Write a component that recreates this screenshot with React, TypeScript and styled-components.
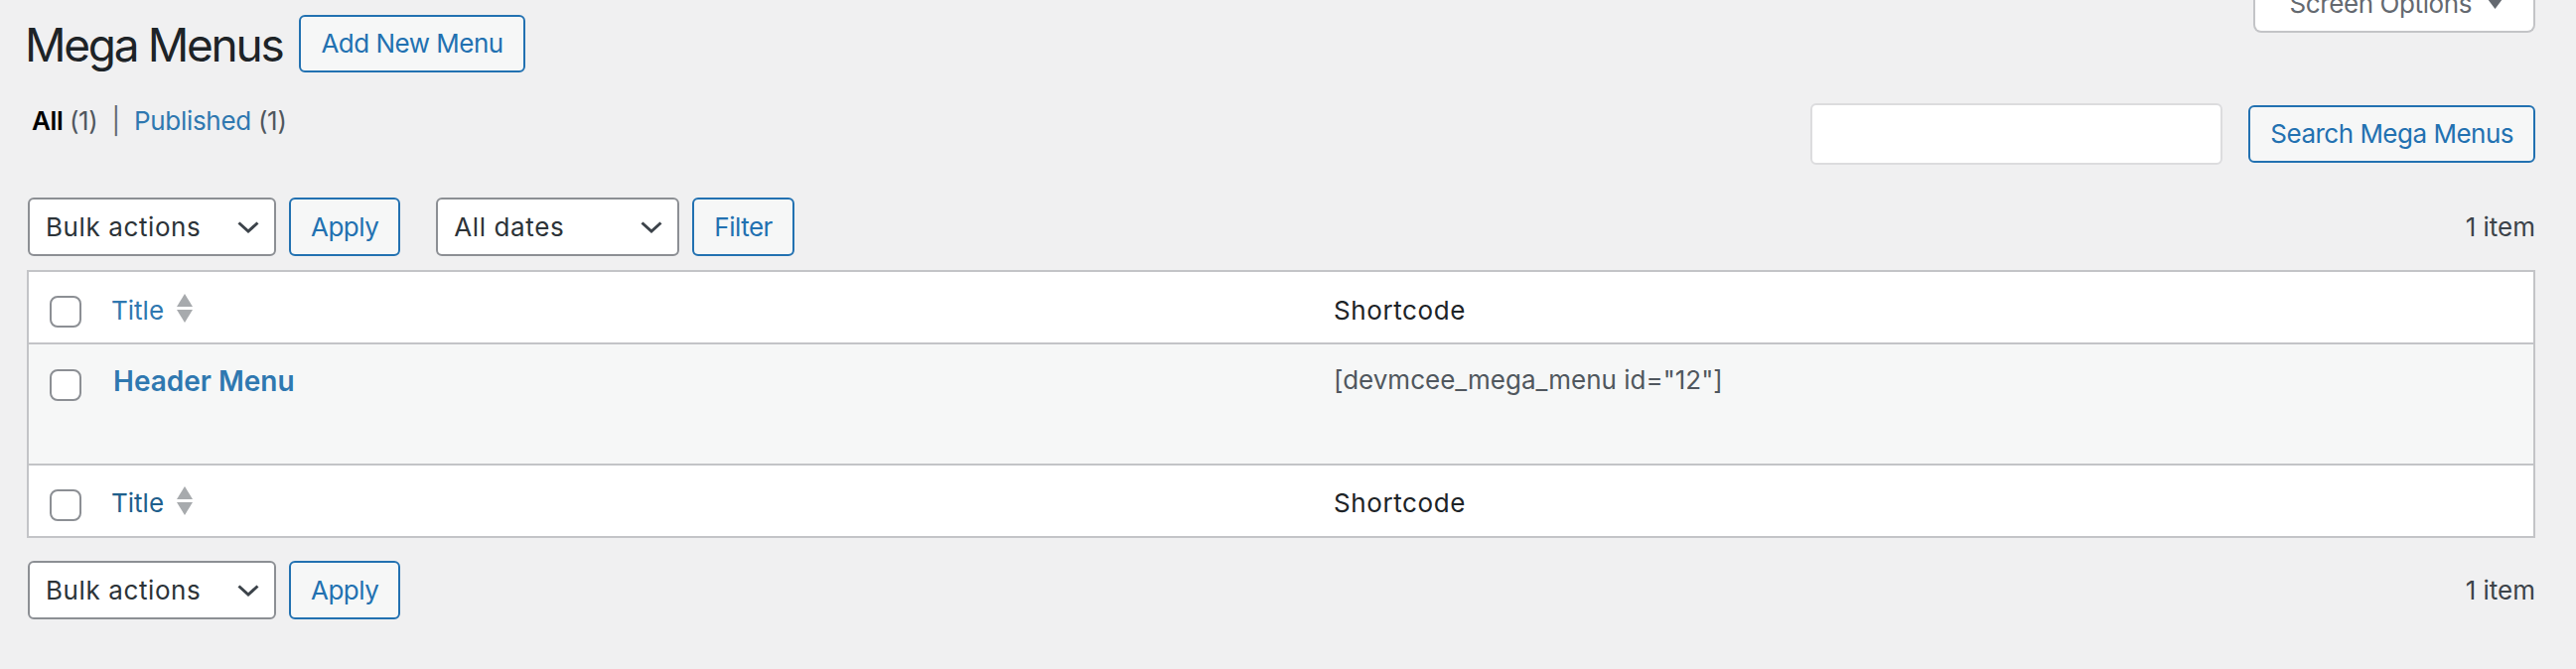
import React from "react";
import styled, { createGlobalStyle } from "styled-components";

const GlobalStyle = createGlobalStyle`
  html, body {
    margin: 0;
    padding: 0;
    background: #f0f0f1;
  }
  body {
    font-family: Inter, "Noto Sans", "Liberation Sans", sans-serif;
    color: #3c434a;
    font-size: 26px;
    line-height: 36px;
  }
  * { box-sizing: border-box; }
`;

const Page = styled.div`
  min-height: 674px;
  padding: 0 41px 0 27px;
`;

const HeadRow = styled.div`
  display: flex;
  justify-content: space-between;
  align-items: flex-start;
`;

const TitleGroup = styled.div`
  display: flex;
  align-items: flex-start;
  gap: 17px;
  margin-top: 15px;
`;

const Heading = styled.h1`
  margin: 0 0 0 -2px;
  font-size: 46px;
  line-height: 60px;
  font-weight: 400;
  letter-spacing: -2.3px;
  color: #1d2327;
`;

const OutlineButton = styled.button<{ $h?: number }>`
  height: ${(p) => p.$h ?? 58}px;
  padding: 0 20px;
  border: 2px solid #2271b1;
  border-radius: 6px;
  background: #f6f7f7;
  color: #2271b1;
  font-family: inherit;
  font-size: 26px;
  letter-spacing: -0.5px;
  line-height: ${(p) => (p.$h ?? 58) - 4}px;
  white-space: nowrap;
  cursor: pointer;
`;

const ScreenTab = styled.button`
  display: flex;
  align-items: flex-start;
  gap: 16px;
  margin-top: -28px;
  padding: 14px 31px 9px 34px;
  border: 2px solid #c3c4c7;
  border-top: none;
  border-radius: 0 0 8px 8px;
  background: #fff;
  color: #646970;
  font-family: inherit;
  font-size: 26px;
  letter-spacing: -0.4px;
  line-height: 36px;
`;

const Caret = styled.svg`
  margin-top: 13px;
  flex: none;
`;

const ViewsRow = styled.div`
  display: flex;
  justify-content: space-between;
  align-items: flex-start;
  margin-top: 29px;
`;

const Views = styled.ul`
  display: flex;
  margin: 0 0 0 5px;
  padding: 0;
  list-style: none;
  color: #646970;
  letter-spacing: -0.3px;
  white-space: pre;
`;

const ViewLink = styled.a<{ $current?: boolean }>`
  color: ${(p) => (p.$current ? "#000" : "#2f78b0")};
  font-weight: ${(p) => (p.$current ? 600 : 400)};
  text-decoration: none;
`;

const Count = styled.span`
  color: #50575e;
  font-weight: 400;
`;

const SearchBox = styled.div`
  display: flex;
  align-items: center;
  gap: 26px;
`;

const SearchInput = styled.input`
  width: 415px;
  height: 62px;
  border: 2px solid #dcdcde;
  border-radius: 6px;
  background: #fff;
  font-family: inherit;
  font-size: 26px;
  padding: 0 16px;
`;

const TableNav = styled.div<{ $top: number }>`
  display: flex;
  justify-content: space-between;
  align-items: center;
  margin-top: ${(p) => p.$top}px;
  padding-left: 1px;
`;

const Actions = styled.div`
  display: flex;
  align-items: center;
  gap: 36px;
`;

const ActionGroup = styled.div`
  display: flex;
  align-items: center;
  gap: 13px;
`;

const SelectBox = styled.div<{ $w: number }>`
  display: flex;
  align-items: center;
  justify-content: space-between;
  width: ${(p) => p.$w}px;
  height: 59px;
  padding: 0 15px 0 16px;
  border: 2px solid #8c8f94;
  border-radius: 6px;
  background: #fff;
  color: #2c3338;
  font-size: 26px;
  letter-spacing: 0.6px;
`;

const ItemCount = styled.span`
  color: #3c434a;
`;

const ListTable = styled.div`
  margin-top: 14px;
  border: 2px solid #c3c4c7;
  background: #fff;
`;

const Row = styled.div<{ $kind: "head" | "body" | "foot" }>`
  display: grid;
  grid-template-columns: 63px 1231px 1fr;
  height: ${(p) => (p.$kind === "body" ? 120 : 71)}px;
  background: ${(p) => (p.$kind === "body" ? "#f6f7f7" : "#fff")};
  border-top: ${(p) => (p.$kind === "head" ? "none" : "2px solid #c3c4c7")};
  box-sizing: content-box;
`;

const CheckCell = styled.div<{ $top: number }>`
  padding: ${(p) => p.$top}px 0 0 21px;
`;

const Check = styled.input.attrs({ type: "checkbox" })`
  appearance: none;
  display: block;
  margin: 0;
  width: 32px;
  height: 32px;
  border: 2px solid #8c8f94;
  border-radius: 8px;
  background: #fff;
`;

const Cell = styled.div<{ $top: number; $left?: number }>`
  display: flex;
  align-items: flex-start;
  gap: 13px;
  padding: ${(p) => p.$top}px 20px 0 ${(p) => p.$left ?? 20}px;
  color: #50575e;
  font-size: 26px;
  line-height: 36px;
`;

const HeadLabel = styled.span`
  color: #1d2327;
  letter-spacing: 0.6px;
`;

const SortLink = styled.a<{ $dark?: boolean }>`
  color: ${(p) => (p.$dark ? "#1f5f8c" : "#2f78b0")};
  text-decoration: none;
`;

const SortArrows = styled.svg`
  margin-top: 1px;
  flex: none;
`;

const RowTitle = styled.a`
  color: #2f78b0;
  font-size: 28px;
  font-weight: 600;
  text-decoration: none;
`;

const Chevron = () => (
  <svg width="22" height="12" viewBox="0 0 22 12">
    <polyline
      points="1.5,1.5 11,10 20.5,1.5"
      fill="none"
      stroke="#3c434a"
      strokeWidth="3"
    />
  </svg>
);

const Select = ({ label, width }: { label: string; width: number }) => (
  <SelectBox $w={width}>
    <span>{label}</span>
    <Chevron />
  </SelectBox>
);

const Sorter = ({ dark }: { dark?: boolean }) => (
  <>
    <SortLink $dark={dark}>Title</SortLink>
    <SortArrows width="16" height="29" viewBox="0 0 16 29">
      <polygon points="8,0 16,13 0,13" fill="#a7aaad" />
      <polygon points="0,16 16,16 8,29" fill="#a7aaad" />
    </SortArrows>
  </>
);

const Nav = ({ top, dates }: { top: number; dates?: boolean }) => (
  <TableNav $top={top}>
    <Actions>
      <ActionGroup>
        <Select label="Bulk actions" width={250} />
        <OutlineButton $h={59}>Apply</OutlineButton>
      </ActionGroup>
      {dates && (
        <ActionGroup>
          <Select label="All dates" width={245} />
          <OutlineButton $h={59}>Filter</OutlineButton>
        </ActionGroup>
      )}
    </Actions>
    <ItemCount>1 item</ItemCount>
  </TableNav>
);

export default function App() {
  return (
    <>
      <GlobalStyle />
      <Page>
        <HeadRow>
          <TitleGroup>
            <Heading>Mega Menus</Heading>
            <OutlineButton>Add New Menu</OutlineButton>
          </TitleGroup>
          <ScreenTab>
            <span>Screen Options</span>
            <Caret width="15" height="10" viewBox="0 0 15 10">
              <polygon points="0,0 15,0 7.5,10" fill="#646970" />
            </Caret>
          </ScreenTab>
        </HeadRow>

        <ViewsRow>
          <Views>
            <li>
              <ViewLink $current>
                All <Count>(1)</Count>
              </ViewLink>
              {"  |  "}
            </li>
            <li>
              <ViewLink>
                Published <Count>(1)</Count>
              </ViewLink>
            </li>
          </Views>
          <SearchBox>
            <SearchInput type="search" />
            <OutlineButton>Search Mega Menus</OutlineButton>
          </SearchBox>
        </ViewsRow>

        <Nav top={33} dates />

        <ListTable>
          <Row $kind="head">
            <CheckCell $top={24}>
              <Check />
            </CheckCell>
            <Cell $top={21}>
              <Sorter />
            </Cell>
            <Cell $top={21}>
              <HeadLabel>Shortcode</HeadLabel>
            </Cell>
          </Row>
          <Row $kind="body">
            <CheckCell $top={25}>
              <Check />
            </CheckCell>
            <Cell $top={19} $left={22}>
              <RowTitle>Header Menu</RowTitle>
            </Cell>
            <Cell $top={18}>[devmcee_mega_menu id="12"]</Cell>
          </Row>
          <Row $kind="foot">
            <CheckCell $top={24}>
              <Check />
            </CheckCell>
            <Cell $top={20}>
              <Sorter dark />
            </Cell>
            <Cell $top={20}>
              <HeadLabel>Shortcode</HeadLabel>
            </Cell>
          </Row>
        </ListTable>

        <Nav top={23} />
      </Page>
    </>
  );
}
